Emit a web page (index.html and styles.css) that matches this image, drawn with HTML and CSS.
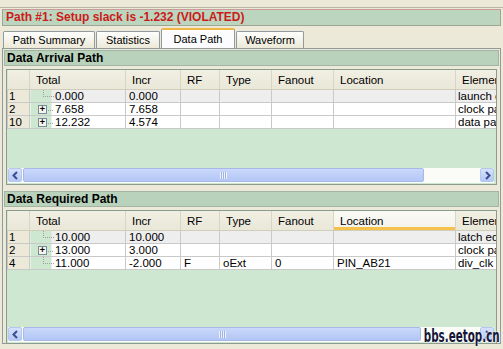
FILE: index.html
```html
<!DOCTYPE html>
<html lang="en">
<head>
    <meta charset="UTF-8">
    <title>Path Report</title>
    <link rel="stylesheet" href="styles.css">
</head>
<body>

<div class="top-strip"></div>

<div class="title">Path #1: Setup slack is -1.232 (VIOLATED)</div>

<!-- Tabs -->
<div class="tabs">
    <div class="tab t-summary">Path Summary</div>
    <div class="tab t-stats">Statistics</div>
    <div class="tab t-data active">Data Path</div>
    <div class="tab t-wave">Waveform</div>
</div>

<div class="panel">

    <!-- Arrival -->
    <div class="section-head">Data Arrival Path</div>
    <div class="grid grid-a">
        <table>
            <colgroup>
                <col class="c-num"><col class="c-total"><col class="c-incr"><col class="c-rf">
                <col class="c-type"><col class="c-fan"><col class="c-loc"><col class="c-el">
            </colgroup>
            <tr class="head">
                <th></th><th>Total</th><th>Incr</th><th>RF</th><th>Type</th><th>Fanout</th><th>Location</th><th>Element</th>
            </tr>
            <tr class="first">
                <td class="num">1</td>
                <td class="tree"><span class="node"><span class="dots"></span></span>0.000</td>
                <td>0.000</td><td></td><td></td><td></td><td></td><td class="el">launch edge time</td>
            </tr>
            <tr>
                <td class="num">2</td>
                <td class="tree"><span class="node"><span class="plus">+</span></span>7.658</td>
                <td>7.658</td><td></td><td></td><td></td><td></td><td class="el">clock path</td>
            </tr>
            <tr>
                <td class="num">10</td>
                <td class="tree"><span class="node"><span class="plus">+</span></span>12.232</td>
                <td>4.574</td><td></td><td></td><td></td><td></td><td class="el">data path</td>
            </tr>
        </table>
        <div class="hscroll">
            <div class="sbtn"><svg width="9" height="9" viewBox="0 0 9 9"><path d="M6 1 L2.5 4.5 L6 8" fill="none" stroke="#3a4f8f" stroke-width="2"/></svg></div>
            <div class="thumb thumb-a"><span class="grip"></span></div>
            <div class="track"></div>
            <div class="sbtn"><svg width="9" height="9" viewBox="0 0 9 9"><path d="M3 1 L6.5 4.5 L3 8" fill="none" stroke="#3a4f8f" stroke-width="2"/></svg></div>
        </div>
    </div>

    <!-- Required -->
    <div class="section-head second">Data Required Path</div>
    <div class="grid grid-b">
        <table>
            <colgroup>
                <col class="c-num"><col class="c-total"><col class="c-incr"><col class="c-rf">
                <col class="c-type"><col class="c-fan"><col class="c-loc"><col class="c-el">
            </colgroup>
            <tr class="head">
                <th></th><th>Total</th><th>Incr</th><th>RF</th><th>Type</th><th>Fanout</th><th class="hover">Location</th><th>Element</th>
            </tr>
            <tr class="first">
                <td class="num">1</td>
                <td class="tree"><span class="node"><span class="dots"></span></span>10.000</td>
                <td>10.000</td><td></td><td></td><td></td><td></td><td class="el">latch edge time</td>
            </tr>
            <tr>
                <td class="num">2</td>
                <td class="tree"><span class="node"><span class="plus">+</span></span>13.000</td>
                <td>3.000</td><td></td><td></td><td></td><td></td><td class="el">clock path</td>
            </tr>
            <tr>
                <td class="num">4</td>
                <td class="tree"><span class="node"><span class="dots"></span></span>11.000</td>
                <td>-2.000</td><td>F</td><td>oExt</td><td>0</td><td>PIN_AB21</td><td class="el">div_clk</td>
            </tr>
        </table>
        <div class="hscroll">
            <div class="sbtn"><svg width="9" height="9" viewBox="0 0 9 9"><path d="M6 1 L2.5 4.5 L6 8" fill="none" stroke="#3a4f8f" stroke-width="2"/></svg></div>
            <div class="thumb thumb-b"><span class="grip"></span></div>
            <div class="track"></div>
            <div class="sbtn"><svg width="9" height="9" viewBox="0 0 9 9"><path d="M3 1 L6.5 4.5 L3 8" fill="none" stroke="#3a4f8f" stroke-width="2"/></svg></div>
        </div>
    </div>

</div>

<div class="watermark">bbs.eetop.cn</div>

</body>
</html>
```

FILE: styles.css
```css
body {
    margin: 0;
    background-color: #ece9d8;
    font-family: "Liberation Sans", Arial, sans-serif;
    font-size: 11px;
    color: #000;
}
.top-strip {
    height: 7px;
    border-bottom: 1px solid #b8b6a6;
}
.title {
    margin: 1px 2px 0 2px;
    height: 15px;
    line-height: 15px;
    padding-left: 3px;
    background-color: #bcd5be;
    border: 1px solid #9fa794;
    border-top-color: #c99a98;
    color: #cc1a1a;
    font-weight: bold;
    font-size: 12px;
}
.tabs {
    display: flex;
    margin-top: 3px;
    padding-left: 3px;
    height: 19px;
    align-items: flex-end;
}
.tab {
    height: 17px;
    line-height: 17px;
    text-align: center;
    margin-right: 1px;
    border: 1px solid #919b9c;
    border-bottom: none;
    background: linear-gradient(#fefefd, #ece9d8);
    border-radius: 2px 2px 0 0;
    font-size: 11px;
    box-sizing: border-box;
}
.t-summary { width: 92px; }
.t-stats { width: 64px; }
.t-data { width: 74px; }
.t-wave { width: 68px; }
.tab.active {
    height: 20px;
    line-height: 18px;
    background: #fcfcfe;
    border-top: 2px solid #f0b543;
}
.panel {
    margin: 0 2px;
    border: 1px solid #919b9c;
    padding: 1px 1px 0 1px;
    height: 296px;
    box-sizing: border-box;
}
.section-head {
    height: 14px;
    line-height: 14px;
    padding-left: 2px;
    background-color: #b8d2bb;
    border: 1px solid #a2b4a3;
    font-weight: bold;
    font-size: 12px;
}
.section-head.second {
    margin-top: 6px;
}
.grid {
    margin: 3px 2px 0 2px;
    border: 1px solid #8d9a8f;
    background-color: #cde7d0;
    display: flex;
    flex-direction: column;
    justify-content: space-between;
    box-sizing: border-box;
    overflow: hidden;
}
.grid-a { height: 116px; }
.grid-b { height: 134px; }
table {
    border-collapse: collapse;
    table-layout: fixed;
    width: 493px;
}
.c-num { width: 22px; }
.c-total { width: 96px; }
.c-incr { width: 55px; }
.c-rf { width: 39px; }
.c-type { width: 52px; }
.c-fan { width: 62px; }
.c-loc { width: 122px; }
.c-el { width: 45px; }
th {
    height: 19px;
    padding: 0 0 0 6px;
    text-align: left;
    font-weight: normal;
    background: linear-gradient(#f1efe2, #e9e7d8);
    border-right: 1px solid #d8d5c2;
    border-bottom: 1px solid #d0cdbb;
    white-space: nowrap;
    overflow: hidden;
    font-size: 11.5px;
}
th.hover {
    background: linear-gradient(#fafaf5, #f3f2ea);
    box-shadow: inset 0 -3px 0 #f6c24c;
}
td {
    height: 12px;
    padding: 0 0 0 3px;
    background-color: #fff;
    border: 1px solid #c9c9c9;
    border-top: none;
    white-space: nowrap;
    overflow: hidden;
    line-height: 12px;
    font-size: 11.5px;
}
tr.first td {
    background-color: #eeeeee;
}
td.num {
    background-color: #ece9d8;
    padding-left: 1px;
}
tr.first td.num {
    background-color: #ece9d8;
}
td.tree {
    padding-left: 0;
    background: linear-gradient(90deg, #cde7d0 0, #cde7d0 21px, #fff 21px);
}
tr.first td.tree {
    background: linear-gradient(90deg, #cde7d0 0, #cde7d0 21px, #eee 21px);
}
.node {
    display: inline-block;
    width: 25px;
    height: 12px;
    vertical-align: top;
    position: relative;
}
.dots {
    position: absolute;
    left: 13px;
    top: 0;
    width: 10px;
    height: 6px;
    border-left: 1px dotted #a0a0a0;
    border-bottom: 1px dotted #a0a0a0;
}
.plus {
    position: absolute;
    left: 8px;
    top: 2px;
    width: 7px;
    height: 7px;
    border: 1px solid #7a8a99;
    background: #f4f4f0;
    font-size: 9px;
    line-height: 7px;
    text-align: center;
    font-weight: bold;
    color: #000;
}
.plus::after {
    content: "";
    position: absolute;
    left: 9px;
    top: 4px;
    width: 5px;
    border-top: 1px dotted #a0a0a0;
}
td.el {
    padding-left: 2px;
}
.hscroll {
    display: flex;
    height: 15px;
    margin: 0 2px 1px 1px;
    background-color: #fbfbf7;
    flex-shrink: 0;
}
.sbtn {
    width: 14px;
    height: 14px;
    border: 1px solid #b6c6ef;
    border-radius: 2px;
    background: linear-gradient(#d6e1fb, #b5c8f5);
    display: flex;
    align-items: center;
    justify-content: center;
    box-sizing: border-box;
}
.thumb {
    height: 14px;
    margin-left: 1px;
    border: 1px solid #a7b9e8;
    border-radius: 2px;
    background: linear-gradient(#c9d8fb, #b3c6f4);
    box-sizing: border-box;
    display: flex;
    align-items: center;
    justify-content: center;
}
.thumb-a { width: 401px; }
.thumb-b { width: 398px; }
.grip {
    width: 7px;
    height: 7px;
    background: repeating-linear-gradient(90deg, #eef2fd 0, #eef2fd 1px, #9fb2e4 1px, #9fb2e4 2px);
}
.track {
    flex: 1;
}
.watermark {
    position: absolute;
    right: 3px;
    top: 327px;
    font-family: "DejaVu Sans Condensed", "DejaVu Sans", sans-serif;
    font-weight: bold;
    font-size: 18px;
    line-height: 18px;
    color: #15163a;
    transform: scaleX(0.64);
    transform-origin: right top;
    text-shadow: 0 0 2px #fff, 0 0 2px #fff;
}
```
